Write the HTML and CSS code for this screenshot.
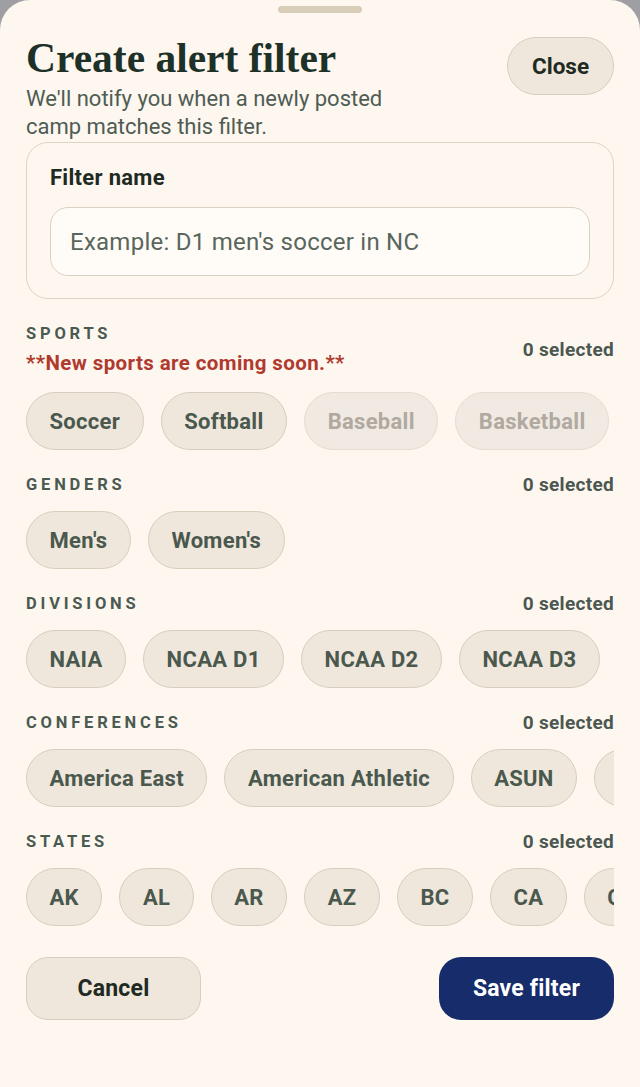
FILE: index.html
```html
<!DOCTYPE html>
<html lang="en">
<head>
<meta charset="utf-8">
<title>Create alert filter</title>
<link rel="stylesheet" href="styles.css">
</head>
<body>
<div class="sheet">
  <div class="handle"></div>
  <header class="head">
    <div class="head-text">
      <h1 class="title">Create alert filter</h1>
      <p class="subtitle">We'll notify you when a newly posted camp matches this filter.</p>
    </div>
    <button class="btn-close">Close</button>
  </header>

  <div class="name-card">
    <label class="name-label" for="fname">Filter name</label>
    <input id="fname" class="name-input" type="text" placeholder="Example: D1 men's soccer in NC">
  </div>

  <section class="group">
    <div class="group-head">
      <div>
        <div class="group-title">SPORTS</div>
        <div class="group-note">**New sports are coming soon.**</div>
      </div>
      <div class="group-count">0 selected</div>
    </div>
    <div class="chips">
      <span class="chip">Soccer</span>
      <span class="chip">Softball</span>
      <span class="chip chip-off">Baseball</span>
      <span class="chip chip-off">Basketball</span>
    </div>
  </section>

  <section class="group">
    <div class="group-head">
      <div class="group-title">GENDERS</div>
      <div class="group-count">0 selected</div>
    </div>
    <div class="chips">
      <span class="chip">Men's</span>
      <span class="chip">Women's</span>
    </div>
  </section>

  <section class="group">
    <div class="group-head">
      <div class="group-title">DIVISIONS</div>
      <div class="group-count">0 selected</div>
    </div>
    <div class="chips">
      <span class="chip">NAIA</span>
      <span class="chip">NCAA D1</span>
      <span class="chip">NCAA D2</span>
      <span class="chip">NCAA D3</span>
      <span class="chip">NJCAA</span>
    </div>
  </section>

  <section class="group">
    <div class="group-head">
      <div class="group-title">CONFERENCES</div>
      <div class="group-count">0 selected</div>
    </div>
    <div class="chips">
      <span class="chip">America East</span>
      <span class="chip">American Athletic</span>
      <span class="chip">ASUN</span>
      <span class="chip">Atlantic 10</span>
      <span class="chip">ACC</span>
    </div>
  </section>

  <section class="group">
    <div class="group-head">
      <div class="group-title">STATES</div>
      <div class="group-count">0 selected</div>
    </div>
    <div class="chips">
      <span class="chip">AK</span>
      <span class="chip">AL</span>
      <span class="chip">AR</span>
      <span class="chip">AZ</span>
      <span class="chip">BC</span>
      <span class="chip">CA</span>
      <span class="chip">CO</span>
      <span class="chip">CT</span>
    </div>
  </section>

  <footer class="actions">
    <button class="btn btn-cancel">Cancel</button>
    <button class="btn btn-save">Save filter</button>
  </footer>
</div>
</body>
</html>
```

FILE: styles.css
```css
* { box-sizing: border-box; }

html, body {
  margin: 0;
  padding: 0;
  background: #9e9ea3;
  font-family: Roboto, "Liberation Sans", sans-serif;
}

.sheet {
  width: 640px;
  min-height: 1087px;
  background: #fdf7f0;
  border-radius: 30px 30px 0 0;
  padding: 6px 26px 40px;
}

.handle {
  width: 84px;
  height: 7px;
  border-radius: 4px;
  background: #d7cdb9;
  margin: 0 auto;
}

.head {
  display: flex;
  justify-content: space-between;
  align-items: flex-start;
  margin-top: 23px;
}

.title {
  margin: 0;
  font-family: "Liberation Serif", serif;
  font-weight: 700;
  font-size: 41.5px;
  line-height: 44px;
  color: #1e3128;
}

.subtitle {
  margin: 5px 0 0;
  width: 390px;
  font-size: 22px;
  line-height: 28px;
  color: #4f5c54;
}

.btn-close {
  margin-top: 1px;
  width: 107px;
  height: 58px;
  border-radius: 30px;
  border: 1.5px solid #d8cebd;
  background: #efe7dc;
  font-family: inherit;
  font-weight: 700;
  font-size: 22.5px;
  color: #1e2a22;
}

.name-card {
  margin-top: 1px;
  border: 1.5px solid #ddd4c3;
  border-radius: 22px;
  padding: 22px 23px 22px;
  display: flex;
  flex-direction: column;
}

.name-label {
  font-weight: 700;
  font-size: 22px;
  line-height: 26px;
  letter-spacing: 0.3px;
  color: #1e2a22;
}

.name-input {
  margin-top: 16px;
  height: 69px;
  border: 1.5px solid #d9d1c2;
  border-radius: 18px;
  background: #fffcf7;
  padding: 0 19px;
  font-family: inherit;
  font-size: 24px;
  letter-spacing: 0.25px;
  color: #1e2a22;
  outline: none;
}

.name-input::placeholder {
  color: #59665d;
}

.group {
  margin-top: 24px;
}

.group-head {
  display: flex;
  justify-content: space-between;
  align-items: center;
}

.group-title {
  font-weight: 700;
  font-size: 16.5px;
  line-height: 21px;
  letter-spacing: 3.8px;
  color: #4b5a51;
}

.group-note {
  margin-top: 6px;
  font-weight: 700;
  font-size: 20.5px;
  line-height: 26px;
  letter-spacing: 0.4px;
  color: #b03a2e;
}

.group-count {
  font-weight: 700;
  font-size: 19px;
  line-height: 21px;
  letter-spacing: 0.3px;
  color: #4b5750;
}

.chips {
  margin-top: 16px;
  display: flex;
  gap: 17px;
  overflow: hidden;
}

.chip {
  flex: none;
  height: 58px;
  padding: 0 22.5px;
  display: flex;
  align-items: center;
  border-radius: 30px;
  border: 1.5px solid #d8cebd;
  background: #efe7dc;
  font-weight: 700;
  font-size: 22px;
  letter-spacing: 0.3px;
  color: #4a584e;
}

.chip-off {
  background: #f0eae3;
  border-color: #e5ddd2;
  color: #b1a99f;
}

.actions {
  margin-top: 31px;
  display: flex;
  justify-content: space-between;
}

.btn {
  width: 175px;
  height: 63px;
  border-radius: 22px;
  font-family: inherit;
  font-weight: 700;
  font-size: 23px;
  letter-spacing: 0.2px;
}

.btn-cancel {
  border: 1.5px solid #d8cebd;
  background: #efe7dc;
  color: #1e2a22;
}

.btn-save {
  border: none;
  background: #172c6b;
  color: #ffffff;
}
```
